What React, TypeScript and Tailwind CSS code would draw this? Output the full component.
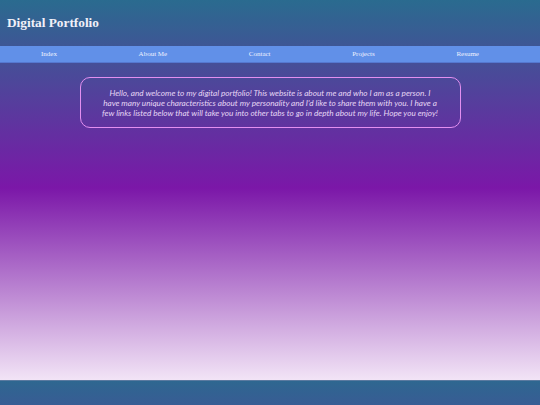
import React from "react";

const links = ["Index", "About Me", "Contact", "Projects", "Resume"];

export default function App() {
  return (
    <div className="min-h-[405px] w-full flex flex-col">
      <div className="flex-1 flex flex-col bg-[linear-gradient(to_bottom,#2a6b8f_0%,#7b17a8_49.5%,#f2e4f6_100%)]">
        <header className="h-[46px] flex items-center pl-[7px]">
          <h1 className="text-[13.3px] font-bold text-[#f0f0f8] font-['Liberation_Serif',serif] leading-none">
            Digital Portfolio
          </h1>
        </header>

        <nav className="h-[17px] bg-[#6190e8] border-b border-[#5578d0] flex items-center justify-between pl-[41px] pr-[61px]">
          {links.map((l) => (
            <a
              key={l}
              className="text-[7px] text-[#eef0ff] font-['Liberation_Serif',serif] leading-none pt-[1px]"
            >
              {l}
            </a>
          ))}
        </nav>

        <div className="flex justify-center pt-[14px]">
          <div className="w-[381px] h-[51px] rounded-[10px] border-[1.5px] border-[#e38ff0] flex items-center justify-center">
            <p className="text-center italic text-[8.2px] leading-[10px] text-[#e6d6f5] font-['Lato',sans-serif] whitespace-nowrap">
              Hello, and welcome to my digital portfolio! This website is about me and who I am as a person. I
              <br />
              have many unique characteristics about my personality and I'd like to share them with you. I have a
              <br />
              few links listed below that will take you into other tabs to go in depth about my life. Hope you enjoy!
            </p>
          </div>
        </div>
      </div>

      <footer className="h-[25px] border-t border-[#5a7aa0] bg-[linear-gradient(to_bottom,#2e6790,#385c94)]" />
    </div>
  );
}
